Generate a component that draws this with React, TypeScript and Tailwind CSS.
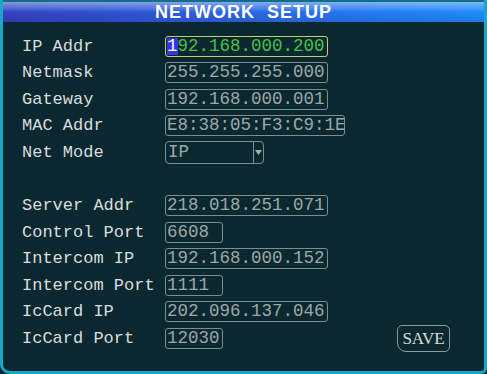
import React from 'react';

type Row = { label: string; value: string; width: string; active?: boolean; select?: boolean };

const groupA: Row[] = [
  { label: 'IP Addr', value: '192.168.000.200', width: 'w-[163px]', active: true },
  { label: 'Netmask', value: '255.255.255.000', width: 'w-[163px]' },
  { label: 'Gateway', value: '192.168.000.001', width: 'w-[163px]' },
  { label: 'MAC Addr', value: 'E8:38:05:F3:C9:1E', width: 'w-[180px]' },
  { label: 'Net Mode', value: 'IP', width: 'w-[99px]', select: true },
];

const groupB: Row[] = [
  { label: 'Server Addr', value: '218.018.251.071', width: 'w-[163px]' },
  { label: 'Control Port', value: '6608', width: 'w-[58px]' },
  { label: 'Intercom IP', value: '192.168.000.152', width: 'w-[163px]' },
  { label: 'Intercom Port', value: '1111', width: 'w-[58px]' },
  { label: 'IcCard IP', value: '202.096.137.046', width: 'w-[163px]' },
  { label: 'IcCard Port', value: '12030', width: 'w-[58px]' },
];

const mono = { fontFamily: '"Liberation Mono", "DejaVu Sans Mono", monospace' };

const Field: React.FC<{ row: Row }> = ({ row }) => {
  if (row.active) {
    return (
      <div className={`${row.width} h-[21px] border border-[#c4cc6c] rounded-[3px] flex items-center pl-[1px] text-[17.5px] leading-none text-[#48c048]`}>
        <span className="bg-[#3434e0] text-white h-[17px] flex items-center">1</span>
        <span>92.168.000.200</span>
      </div>
    );
  }
  if (row.select) {
    return (
      <div className={`${row.width} h-[23px] border border-[#7e8e90] rounded-[4px] flex items-stretch text-[17.5px] leading-none text-[#9ca8a8]`}>
        <span className="flex-1 flex items-center pl-[2px]">{row.value}</span>
        <span className="w-[10px] border-l border-[#7e8e90] flex items-center justify-center">
          <svg width="7" height="5" viewBox="0 0 7 5"><path d="M0 0h7L3.5 5z" fill="#a8b2b2" /></svg>
        </span>
      </div>
    );
  }
  return (
    <div className={`${row.width} h-[21px] border border-[#7e8e90] rounded-[3px] flex items-center pl-[1px] text-[17.5px] leading-none text-[#9ca8a8] whitespace-nowrap`}>
      {row.value}
    </div>
  );
};

const RowView: React.FC<{ row: Row; children?: React.ReactNode }> = ({ row, children }) => (
  <div className="h-[26.5px] flex items-center">
    <span className="w-[143px] text-[17px] leading-none text-[#d8dede] whitespace-pre">{row.label}</span>
    <Field row={row} />
    {children}
  </div>
);

export default function App() {
  return (
    <div className="w-[487px] h-[374px] bg-[#0b2830] overflow-hidden" style={mono}>
      <div className="w-full h-full border-l-[3px] border-r-[3px] border-b-[3px] border-[#1aa6c6] rounded-bl-[10px] rounded-br-[6px] flex flex-col">
        {/* title bar */}
        <div className="h-[22px] border-t-2 border-[#12707e] bg-[linear-gradient(to_right,#3440c0,#2c62e0_45%,#1e8cff)]">
          <div className="h-full bg-[linear-gradient(to_bottom,rgba(200,220,255,0.55),rgba(160,200,255,0.25)_35%,rgba(0,0,0,0)_50%,rgba(0,0,40,0.1))] flex items-center justify-center">
            <span
              className="text-white font-bold text-[18px] tracking-[1px] leading-none"
              style={{ fontFamily: '"Liberation Sans", Arial, sans-serif' }}
            >
              NETWORK&nbsp;&nbsp;SETUP
            </span>
          </div>
        </div>

        <div className="flex-1 flex flex-col pl-[19px] pt-[11px]">
          {groupA.map((r) => (
            <RowView key={r.label} row={r} />
          ))}
          <div className="h-[27px]" />
          {groupB.map((r, i) => (
            <RowView key={r.label} row={r}>
              {i === groupB.length - 1 && (
                <div
                  className="ml-[174px] w-[53px] h-[27px] border border-[#8a9a9c] rounded-[5px] rounded-bl-[9px] flex items-center justify-center text-[17px] leading-none text-[#d8dede]"
                  style={{ fontFamily: '"Liberation Serif", serif' }}
                >
                  SAVE
                </div>
              )}
            </RowView>
          ))}
        </div>
      </div>
    </div>
  );
}
